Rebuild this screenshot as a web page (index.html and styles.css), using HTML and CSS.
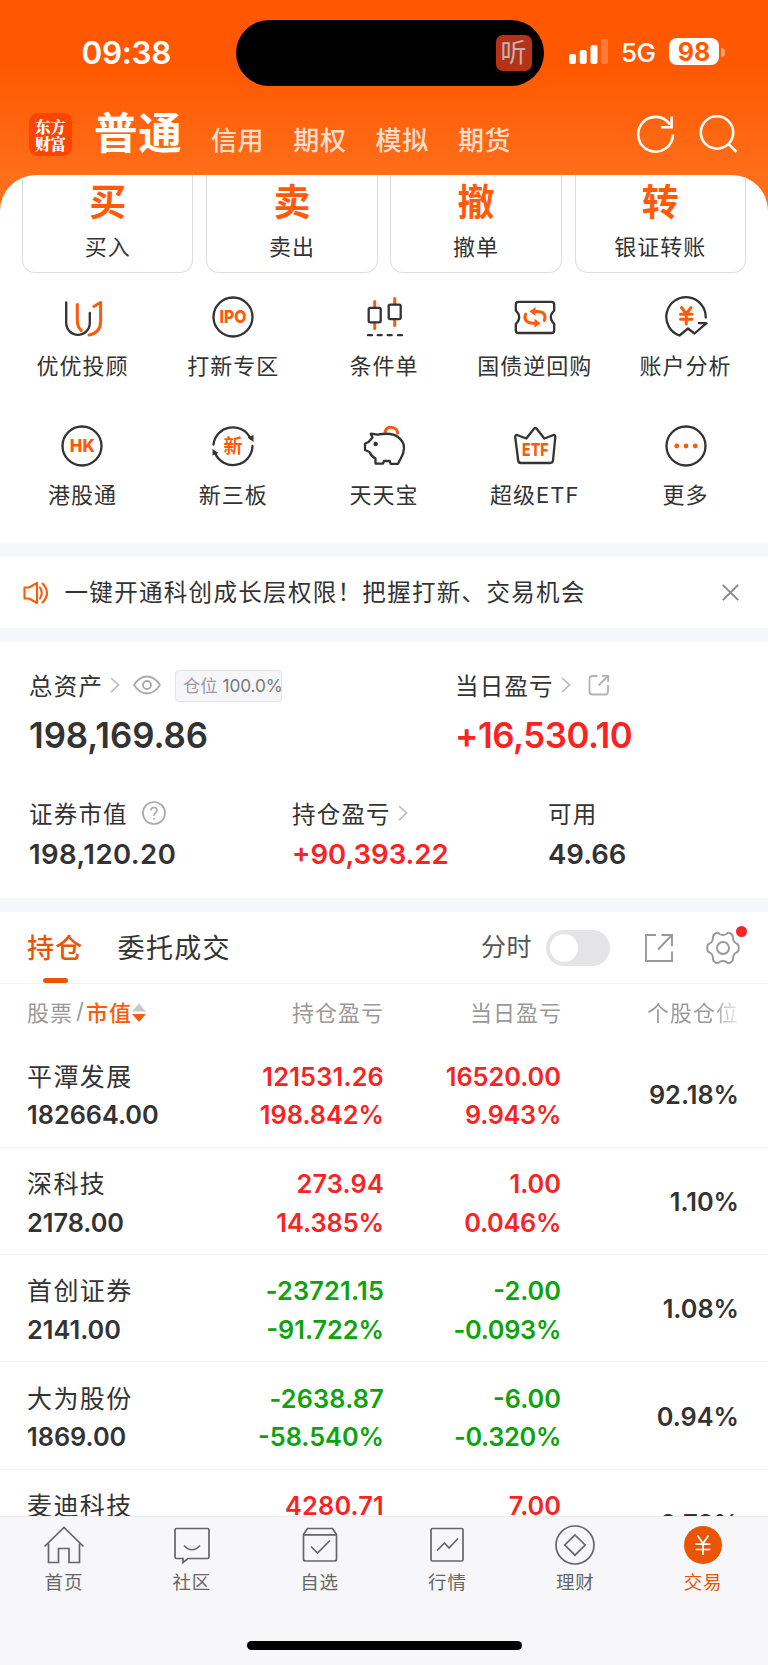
FILE: index.html
```html
<!DOCTYPE html>
<html lang="zh-CN">
<head>
<meta charset="utf-8">
<title>交易</title>
<link rel="stylesheet" href="styles.css">
</head>
<body>
<div class="screen">
  <header class="top">
    <div class="status">
      <span class="clock">09:38</span>
      <div class="island"><span class="listen">听</span></div>
      <svg class="signal" width="40" height="26" viewBox="0 0 40 26"><g fill="#fff"><rect x="0" y="15" width="7" height="10" rx="2"/><rect x="10.700" y="11" width="7" height="14" rx="2"/><rect x="21.500" y="6" width="7" height="19" rx="2"/><rect x="32" y="0" width="7" height="25" rx="2" opacity=".22"/></g></svg>
      <span class="net">5G</span>
      <span class="battery">98</span>
      <span class="battery-tip"></span>
    </div>
    <nav class="nav">
      <div class="logo"><span>东方</span><span>财富</span></div>
      <span class="nav-main">普通</span>
      <span class="nav-item">信用</span>
      <span class="nav-item">期权</span>
      <span class="nav-item">模拟</span>
      <span class="nav-item">期货</span>
      <svg class="nav-refresh" width="44" height="44" viewBox="0 0 44 44" fill="none" stroke="#fff" stroke-width="2.600"><path d="M39 22.500A17.400 17.400 0 1 1 36 12.500M37.600 4.500V15.300H27"/></svg>
      <svg class="nav-search" width="44" height="44" viewBox="0 0 44 44" fill="none" stroke="#fff" stroke-width="2.600"><circle cx="20" cy="20.500" r="16.200"/><path d="M31.200 31.700L39.500 40"/></svg>
    </nav>
  </header>

  <main class="panel">
    <section class="cards">
      <div class="card"><b>买</b><span>买入</span></div>
      <div class="card"><b>卖</b><span>卖出</span></div>
      <div class="card"><b>撤</b><span>撤单</span></div>
      <div class="card"><b>转</b><span>银证转账</span></div>
    </section>

    <section class="tools">
      <div class="tool">
        <svg class="ico" viewBox="0 0 44 44"><path class="k" d="M6.200 7.500V28A11.800 11.800 0 0 0 29.800 28V18"/><path class="o" d="M17.300 9.500V25Q17.300 32 21.300 35.500M33.800 11.500L40.600 7.500V26Q40.600 38 29 40"/></svg>
        <span>优优投顾</span></div>
      <div class="tool">
        <svg class="ico" viewBox="0 0 44 44"><circle class="k" cx="22" cy="22" r="19.500"/><text class="t" x="22" y="28.400" font-size="17.500" textLength="27" lengthAdjust="spacingAndGlyphs">IPO</text></svg>
        <span>打新专区</span></div>
      <div class="tool">
        <svg class="ico" viewBox="0 0 44 44"><path class="o" d="M12.700 6.500V12M12.700 28V33.500M32.700 3.500V9M32.700 25V30.500"/><rect class="k" x="6.700" y="12.800" width="12" height="14.500" rx="1.500"/><rect class="k" x="26.700" y="9.600" width="12" height="14.500" rx="1.500"/><path class="k" d="M6 40.200h4M15.700 40.200h4M25.700 40.200h4M36 40.200h4"/></svg>
        <span>条件单</span></div>
      <div class="tool">
        <svg class="ico" viewBox="0 0 44 44"><path class="k" d="M5.500 6.800H38.500Q41.200 6.800 41.200 9.500V15.500L39.500 17.500Q36 22 39.500 27L41.200 29V35.200Q41.200 38 38.500 38H5.500Q2.800 38 2.800 35.200V29L4.500 27Q8 22 4.500 17.500L2.800 15.500V9.500Q2.800 6.800 5.500 6.800Z"/><path class="o" d="M21 16.500H24C31 16.500 33.500 20.500 31.300 25.500M23 28.200H20C13 28.200 10.500 24 12.700 19"/><path d="M22.500 12V21L16.500 16.500ZM21.500 23.700V32.700L27.500 28.200Z" fill="#ff5a0a"/></svg>
        <span>国债逆回购</span></div>
      <div class="tool">
        <svg class="ico" viewBox="0 0 44 44"><path class="k" d="M41.700 22.500A19.700 19.700 0 1 0 15.500 40.500L24 33.500L30.500 38.500L42.500 28.200H35"/><path class="o" d="M17.500 12.500L22.300 19L27 12.500M22.300 19V29M16.500 19.300H28M16.500 24.300H28"/></svg>
        <span>账户分析</span></div>
      <div class="tool">
        <svg class="ico" viewBox="0 0 44 44"><circle class="k" cx="22" cy="22" r="19.500"/><text class="t" x="22.300" y="28.400" font-size="17.500" textLength="25" lengthAdjust="spacingAndGlyphs">HK</text></svg>
        <span>港股通</span></div>
      <div class="tool">
        <svg class="ico" viewBox="0 0 44 44"><path class="k" d="M2.500 20.500A19.500 19.500 0 0 1 39.500 14.500M41.500 22A19.500 19.500 0 0 1 4 29"/><path d="M36.500 13.500L42.500 11V18ZM1.500 31.500V25L7.500 29Z" fill="#333"/><text class="t cjk" x="22" y="29" font-size="19">新</text></svg>
        <span>新三板</span></div>
      <div class="tool">
        <svg class="ico" viewBox="0 0 44 44"><path class="o" d="M23.200 7.500C25 1.500 34.500 2 35.700 9"/><path class="k" d="M8.700 9.700L15.500 10.700Q30 8 36 13Q42.300 18 42 24C41.800 32 38.500 33.500 36 39.800H28.700L27.700 37H22L21 39.600H13.500V34.500Q9 32 7.500 28L3 26V19.700L6.500 18L10.500 13.500Z"/><circle cx="13.700" cy="20" r="2.200" fill="#333"/></svg>
        <span>天天宝</span></div>
      <div class="tool">
        <svg class="ico" viewBox="0 0 44 44"><path class="k" d="M4 11L13.300 14.500L21 4.700Q22.300 3.300 23.700 4.700L31.300 14.500L40.500 11Q42.500 10.800 42.300 13L40 36.500Q39.700 39 37 39H8Q5.500 39 5.200 36.500L2.200 13Q2.200 10.800 4 11Z"/><text class="t" x="22.300" y="32.200" font-size="17.500" textLength="26.500" lengthAdjust="spacingAndGlyphs">ETF</text></svg>
        <span>超级ETF</span></div>
      <div class="tool">
        <svg class="ico" viewBox="0 0 44 44"><circle class="k" cx="22" cy="22" r="19.500"/><g fill="#ff5a0a"><circle cx="12.700" cy="22" r="2.400"/><circle cx="22" cy="22" r="2.400"/><circle cx="31.300" cy="22" r="2.400"/></g></svg>
        <span>更多</span></div>
    </section>

    <section class="notice">
      <svg width="26" height="24" viewBox="0 0 26 24" fill="none" stroke="#ff5a0a" stroke-width="2.100" stroke-linejoin="round" stroke-linecap="round"><path d="M1.500 6.500H6L14 1.800V22L6 17.500H1.500ZM17 6.500Q20.500 12 17 17.500M19.500 2.500Q28.500 12 19.500 21.500"/></svg>
      <span class="notice-text">一键开通科创成长层权限！把握打新、交易机会</span>
      <svg class="close" width="17" height="17" viewBox="0 0 17 17" fill="none" stroke="#888" stroke-width="1.800"><path d="M.8 .8L16.200 16.200M16.200 .8L.8 16.200"/></svg>
    </section>

    <section class="assets">
      <div class="row-a">
        <div class="cell total">
          <div class="lab">总资产<svg class="chev" width="10" height="16" viewBox="0 0 10 16"><path d="M1 1L8.500 8L1 15"/></svg>
            <svg class="eye" width="28" height="20" viewBox="0 0 28 20" fill="none" stroke="#aaa" stroke-width="1.800"><path d="M1 10Q6.500 1.500 14 1.500T27 10Q21.500 18.500 14 18.500T1 10Z"/><circle cx="14" cy="10" r="4"/></svg>
            <span class="pos"><i>仓位</i>100.0%</span></div>
          <div class="big">198,169.86</div>
        </div>
        <div class="cell">
          <div class="lab">当日盈亏<svg class="chev" width="10" height="16" viewBox="0 0 10 16"><path d="M1 1L8.500 8L1 15"/></svg>
            <svg class="share" width="22" height="22" viewBox="0 0 22 22" fill="none" stroke="#b4b4b4" stroke-width="1.800"><path d="M9.500 2H4.500Q1.500 2 1.500 5V17.500Q1.500 20.500 4.500 20.500H17Q20 20.500 20 17.500V11M14 1.800H20.200V8M20 2L10.500 11.500"/></svg></div>
          <div class="big tight red">+16,530.10</div>
        </div>
      </div>
      <div class="row-b">
        <div class="cell"><div class="lab">证券市值<svg class="help" width="24" height="24" viewBox="0 0 24 24"><circle cx="12" cy="12" r="11" fill="none" stroke="#aaa" stroke-width="1.700"/><path d="M9 9.500Q9 6.500 12 6.500T15 9.300Q15 10.800 13.300 12T12 14.500V15M12 17V18.500" fill="none" stroke="#aaa" stroke-width="1.700"/></svg></div><div class="mid wide">198,120.20</div></div>
        <div class="cell"><div class="lab">持仓盈亏<svg class="chev" width="10" height="16" viewBox="0 0 10 16"><path d="M1 1L8.500 8L1 15"/></svg></div><div class="mid red">+90,393.22</div></div>
        <div class="cell"><div class="lab">可用</div><div class="mid">49.66</div></div>
      </div>
    </section>

    <section class="holdings">
      <div class="tabs">
        <span class="tab active">持仓</span>
        <span class="tab">委托成交</span>
        <span class="minute">分时</span>
        <span class="switch"></span>
        <svg class="export" width="30" height="30" viewBox="0 0 30 30" fill="none" stroke="#999" stroke-width="1.900"><path d="M12 2H2V28H28V18.500M17.500 2H28V13M28 2L14 16.500"/></svg>
        <span class="gear"><svg width="34" height="34" viewBox="0 0 34 34" fill="none" stroke="#999" stroke-width="1.900" stroke-linejoin="round"><circle cx="17" cy="17" r="6"/><path d="M9.500 2.500Q11.500 1 13.500 3Q17 5 20.500 3Q22.500 1 24.500 2.500Q27 3.500 27 6.500Q27 11 30.500 12.500Q33 13.500 32.700 17Q33 20.500 30.500 21.500Q27 23 27 27.500Q27 30.500 24.500 31.500Q22.500 33 20.500 31Q17 29 13.500 31Q11.500 33 9.500 31.500Q7 30.500 7 27.500Q7 23 3.500 21.500Q1 20.500 1.300 17Q1 13.500 3.500 12.500Q7 11 7 6.500Q7 3.500 9.500 2.500Z"/></svg><i class="dot"></i></span>
      </div>
      <div class="thead">
        <span class="c1">股票<em>/</em><b>市值</b><svg width="14" height="20" viewBox="0 0 14 20"><path d="M0 8.500L7 .5L14 8.500Z" fill="#c8c8c8"/><path d="M0 11L7 19L14 11Z" fill="#ff5a0a"/></svg></span>
        <span class="c2">持仓盈亏</span><span class="c3">当日盈亏</span><span class="c4">个股仓位</span>
      </div>
      <div class="stock"><div class="c1"><span class="name">平潭发展</span><span>182664.00</span></div><div class="c2 red"><span>121531.26</span><span class="pct">198.842%</span></div><div class="c3 red"><span>16520.00</span><span class="pct">9.943%</span></div><div class="c4">92.18%</div></div>
      <div class="stock"><div class="c1"><span class="name">深科技</span><span>2178.00</span></div><div class="c2 red"><span>273.94</span><span class="pct">14.385%</span></div><div class="c3 red"><span>1.00</span><span class="pct">0.046%</span></div><div class="c4">1.10%</div></div>
      <div class="stock"><div class="c1"><span class="name">首创证券</span><span>2141.00</span></div><div class="c2 green"><span>-23721.15</span><span class="pct">-91.722%</span></div><div class="c3 green"><span>-2.00</span><span class="pct">-0.093%</span></div><div class="c4">1.08%</div></div>
      <div class="stock"><div class="c1"><span class="name">大为股份</span><span>1869.00</span></div><div class="c2 green"><span>-2638.87</span><span class="pct">-58.540%</span></div><div class="c3 green"><span>-6.00</span><span class="pct">-0.320%</span></div><div class="c4">0.94%</div></div>
      <div class="stock"><div class="c1"><span class="name">麦迪科技</span></div><div class="c2 red"><span>4280.71</span></div><div class="c3 red"><span>7.00</span></div><div class="c4">0.72%</div></div>
    </section>
  </main>

  <footer class="tabbar">
    <div class="items">
      <div class="item"><svg viewBox="0 0 42 42"><path d="M1.500 22.500L21 3.500L40.500 22.500M5.500 19.500V38.500H15.500V24.500H26V38.500H36.500V19.500"/></svg><span>首页</span></div>
      <div class="item"><svg viewBox="0 0 42 42"><path d="M5.500 4.500H36.500Q38 4.500 38 6V33Q38 34.500 36.500 34.500H17L12 38.500V34.500H5.500Q4 34.500 4 33V6Q4 4.500 5.500 4.500ZM13 21.500Q21 30 29 21.500"/></svg><span>社区</span></div>
      <div class="item"><svg viewBox="0 0 42 42"><path d="M4.500 10.500L8.500 4.500H33.500L37.500 10.500V35Q37.500 37 35.500 37H6.500Q4.500 37 4.500 35ZM4.500 10.800H37.500M12 22.500L18.500 29L31 16.500"/></svg><span>自选</span></div>
      <div class="item"><svg viewBox="0 0 42 42"><rect x="5" y="4.500" width="32" height="32.500" rx="1.500"/><path d="M11 26.500L18.500 19L23 24L32 14.500"/></svg><span>行情</span></div>
      <div class="item"><svg viewBox="0 0 42 42"><circle cx="21" cy="21" r="19"/><path d="M21 11L31.200 21L21 31.200L10.800 21Z"/></svg><span>理财</span></div>
      <div class="item on"><svg viewBox="0 0 42 42"><circle cx="21" cy="21" r="19" fill="#ea5504" stroke="none"/><path d="M15.500 11.500L21 19.500L26.500 11.500M21 19.500V31M13.500 20.200H28.500M13.500 25.500H28.500" stroke="#fff"/></svg><span>交易</span></div>
    </div>
    <div class="home-bar"></div>
  </footer>
</div>
</body>
</html>
```
FILE: styles.css
```css
* { box-sizing: border-box; }
body { margin: 0; background: #fff; color: #333; font-family: Inter, "Noto Sans CJK SC", sans-serif; }
svg { display: block; flex: none; }
i, em { font-style: normal; }
.red { color: #fa2323; }
.green { color: #0ca40c; }
.screen { width: 768px; height: 1665px; overflow: hidden; display: flex; flex-direction: column; background: linear-gradient(#ff5800 0, #ff5800 65px, #ff6e1a 175px, #ff6e1a 220px, #fff 221px); }
.top { height: 175px; flex: none; color: #fff; }

.status { height: 105px; display: flex; align-items: center; }
.clock { width: 154px; margin-left: 81.500px; font-size: 31.500px; font-weight: 600; letter-spacing: -.3px; line-height: 36px; }
.island { width: 308px; height: 66px; margin-top: 1px; border-radius: 33px; background: #000; display: flex; align-items: center; justify-content: flex-end; padding-right: 12px; }
.listen { width: 36px; height: 36px; border-radius: 7px; background: #b63216; color: #bdb4b2; font-size: 26px; font-weight: 400; line-height: 36px; text-align: center; }
.signal { margin-left: 25.500px; margin-top: -2px; }
.net { width: 48px; margin-left: 12px; margin-top: 1px; font-size: 26px; font-weight: 500; line-height: 30px; letter-spacing: -.5px; }
.battery { width: 50px; height: 27px; margin-top: -2px; border-radius: 8px; background: #fff; color: #ff5800; font-size: 25px; font-weight: 700; line-height: 28px; text-align: center; }
.battery-tip { width: 4px; height: 9px; margin-left: 2px; border-radius: 0 4px 4px 0; background: rgba(255,255,255,.45); }

.nav { height: 70px; display: flex; align-items: flex-start; padding-left: 29px; }
.logo { width: 43px; height: 43px; margin-top: 8px; border-radius: 9px; background: #ff4400; display: flex; flex-direction: column; align-items: center; justify-content: center; font-family: "Noto Serif CJK SC", "Noto Sans CJK SC", sans-serif; font-size: 15.500px; font-weight: 900; line-height: 17px; }
.nav-main { width: 117px; margin: 0 0 0 22px; font-size: 43.500px; font-weight: 700; line-height: 56px; letter-spacing: .8px; }
.nav-item { width: 82.300px; margin-top: 18px; color: rgba(255,255,255,.8); font-size: 26px; font-weight: 500; line-height: 36px; letter-spacing: .6px; }
.nav-refresh { margin: 7px 0 0 94px; }
.nav-search { margin: 7px 0 0 18.500px; }

.panel { flex: 1; min-height: 0; overflow: hidden; background: #fff; border-radius: 36px 36px 0 0; }
.cards { display: flex; gap: 12.700px; padding: 0 22px; }
.card { flex: 1; height: 98px; border: 1.500px solid #ddd; border-top: 0; border-radius: 0 0 13px 13px; display: flex; flex-direction: column; align-items: center; }
.card b { margin-top: 6px; color: #ff5a0a; font-size: 37px; font-weight: 700; line-height: 44px; }
.card span { margin-top: 6px; font-size: 22px; line-height: 32px; letter-spacing: 1px; }

.tools { display: grid; grid-template-columns: repeat(5, 1fr); grid-auto-rows: 128.500px; height: 270px; padding: 22px 7px 0 7px; }
.tool { display: flex; flex-direction: column; align-items: center; }
.tool > span { margin-top: 11px; font-size: 22px; line-height: 32px; letter-spacing: 1px; white-space: nowrap; }
.ico { width: 44px; height: 44px; }
.k, .o { fill: none; stroke: #333; stroke-width: 2.300; stroke-linejoin: round; stroke-linecap: round; }
.o { stroke: #ff5a0a; stroke-width: 3; }
.t { fill: #ff5a0a; font-family: Inter, sans-serif; font-weight: 800; text-anchor: middle; }
.cjk { font-family: "Noto Sans CJK SC", sans-serif; font-weight: 700; }

.notice { height: 99px; border: solid #f6f7fa; border-width: 14px 0; display: flex; align-items: center; padding: 0 29px 0 23px; }
.notice-text { margin-left: 15.500px; font-size: 23.500px; line-height: 34px; letter-spacing: 1.320px; white-space: nowrap; }
.close { margin-left: auto; }

.assets { height: 256px; padding: 26px 29px 0; }
.lab { display: flex; align-items: center; height: 34px; font-size: 23.500px; letter-spacing: 1.200px; white-space: nowrap; }
.chev { margin-left: 7px; fill: none; stroke: #bbb; stroke-width: 1.700; }
.eye { margin-left: 12.500px; }
.pos { height: 32px; margin-left: 14.500px; margin-top: 1px; padding-left: 7px; width: 107px; border: 1px solid #e4e4e8; border-radius: 4px; background: #f6f6f9; color: #777; font-size: 17.300px; line-height: 30px; letter-spacing: -.1px; }
.pos i { color: #999; margin-right: 5px; }
.share { margin-left: 17px; }
.help { margin-left: 14.500px; }
.row-a, .row-b { display: grid; grid-template-columns: 426px 1fr; height: 129px; }
.row-b { grid-template-columns: 263px 256px 1fr; height: 128px; margin-top: -1px; }
.big { margin-top: 11.500px; font-size: 34.800px; font-weight: 600; line-height: 42px; letter-spacing: -.05px; }
.tight { letter-spacing: -.45px; }
.mid { margin-top: 5.500px; font-size: 27.500px; font-weight: 600; line-height: 36px; }
.wide { letter-spacing: .45px; }

.holdings { border-top: 14px solid #f6f7fa; }
.tabs { height: 72px; border-bottom: 1.500px solid #f3f3f5; display: flex; align-items: center; padding-left: 27px; }
.tab { position: relative; top: 1px; font-size: 27px; line-height: 40px; letter-spacing: 1.300px; margin-right: 34px; }
.tab.active { color: #ea5504; font-weight: 500; }
.tab.active::after { content: ""; position: absolute; left: 16px; bottom: -14px; width: 25px; height: 5px; border-radius: 2.500px; background: #ea5504; }
.minute { width: 65px; margin-left: auto; color: #555; font-size: 25px; letter-spacing: .5px; line-height: 36px; padding-bottom: 1px; }
.switch { width: 64px; height: 36px; border-radius: 18px; background: #e4e4e6; padding: 4px; }
.switch::before { content: ""; display: block; width: 28px; height: 28px; border-radius: 50%; background: #fff; }
.export { margin-left: 34px; }
.gear { position: relative; margin: 0 28px 0 32px; }
.dot { position: absolute; top: -5px; right: -7px; width: 11px; height: 11px; border-radius: 50%; background: #fa2323; }

.thead { display: grid; grid-template-columns: 144px 213px 178px 177px; padding: 0 0 2px 27px; height: 56.500px; align-items: center; color: #999; font-size: 22px; letter-spacing: 1px; white-space: nowrap; }
.thead .c1 { display: flex; align-items: center; }
.thead em { margin: 0 1px 0 3px; }
.thead b { color: #ff5a0a; font-weight: 500; }
.thead svg { margin-top: 3px; }
.c2, .c3, .c4 { text-align: right; }
.thead .c4 { justify-self: end; background: linear-gradient(90deg, #999 70%, #eee); -webkit-background-clip: text; background-clip: text; color: transparent; }
.stock { display: grid; grid-template-columns: 144px 213px 177px 178px; height: 107.250px; padding: 17.300px 0 0 27px; border-bottom: 1.500px solid #f3f3f5; font-size: 25.300px; font-weight: 600; line-height: 38.500px; }
.stock span { display: block; white-space: nowrap; }
.stock .c2 span { letter-spacing: .2px; }
.stock .c2 .pct { letter-spacing: 0; }
.stock .c3 .pct { letter-spacing: -.3px; }
.stock .name { font-size: 25px; font-weight: 400; letter-spacing: 1.400px; }
.stock .c4 { padding-top: 18px; letter-spacing: 0; }

.tabbar { height: 149px; flex: none; background: #f7f7fa; border-top: 1.500px solid #eaeaef; display: flex; flex-direction: column; align-items: center; }
.items { align-self: stretch; display: grid; grid-template-columns: repeat(6, 1fr); height: 124px; padding: 7px 1px 0 0; }
.item { display: flex; flex-direction: column; align-items: center; color: #666; font-size: 18.500px; letter-spacing: .8px; line-height: 28px; }
.item svg { width: 42px; height: 42px; margin-bottom: 2px; fill: none; stroke: #666; stroke-width: 1.700; }
.item.on { color: #ea5504; }
.home-bar { width: 275px; height: 9px; border-radius: 5px; background: #000; }
```
